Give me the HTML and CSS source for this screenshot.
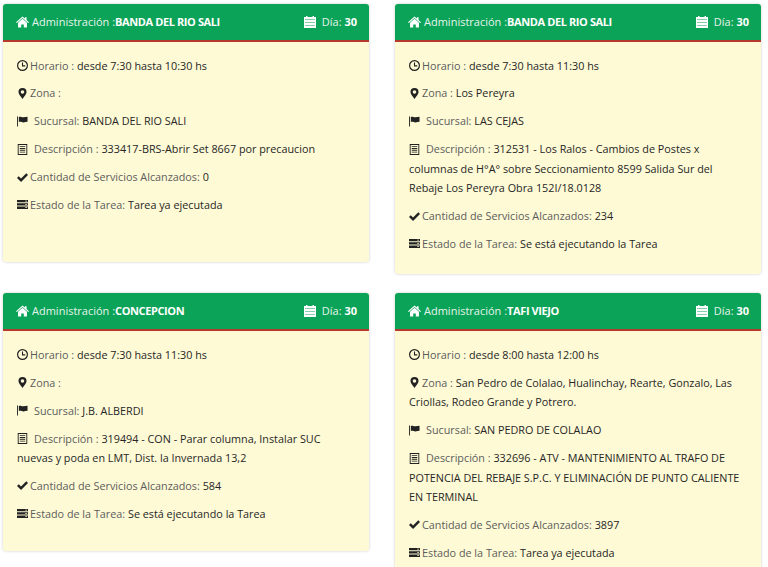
FILE: index.html
```html
<!DOCTYPE html>
<html lang="es">
  <head>
    <meta charset="UTF-8" />
    <title>Tareas programadas</title>
    <link rel="stylesheet" href="styles.css">
  </head>
  <body>
    <svg class="icon-defs" aria-hidden="true">
      <symbol id="i-home" viewBox="0 0 14 12"><path d="M7 0 L9.6 2.3 V1 H11.4 V3.9 L14 6.2 L13.1 7.1 L7 1.8 L.9 7.1 L0 6.2 Z M2.2 6.8 L7 2.6 L11.8 6.8 V12 H8.4 V8.6 H5.6 V12 H2.2 Z"/></symbol>
      <symbol id="i-cal" viewBox="0 0 12 12"><path fill-rule="evenodd" d="M2 0 H3.5 V1 H8.5 V0 H10 V1 H12 V12 H0 V1 H2 Z M1 3.4 V3.9 H11 V3.4 Z M1 6.2 V6.7 H11 V6.2 Z M1 9 V9.5 H11 V9 Z"/></symbol>
      <symbol id="i-clock" viewBox="0 0 12 12"><path fill-rule="evenodd" d="M6 0 A6 6 0 1 1 6 12 A6 6 0 1 1 6 0 Z M6 1.3 A4.7 4.7 0 1 0 6 10.7 A4.7 4.7 0 1 0 6 1.3 Z M5.4 2.8 H6.6 V5.8 H9 V7 H5.4 Z"/></symbol>
      <symbol id="i-pin" viewBox="0 0 10 12"><path fill-rule="evenodd" d="M5 0 A4.4 4.4 0 0 1 9.4 4.4 C9.4 7 6.6 9.8 5 12 C3.4 9.8 .6 7 .6 4.4 A4.4 4.4 0 0 1 5 0 Z M5 2.4 A2 2 0 1 0 5 6.4 A2 2 0 1 0 5 2.4 Z"/></symbol>
      <symbol id="i-flag" viewBox="0 0 12 12"><path d="M0 .5 H1 V11.5 H0 Z M2 1 C4 .2 5 1.6 7 1.4 C8.6 1.3 10 .8 11.5 .8 V6.4 C9.8 6.6 8.6 7 7 7 C5 7 4 5.8 2 6.6 Z"/></symbol>
      <symbol id="i-list" viewBox="0 0 12 12"><path fill-rule="evenodd" d="M.8 0 H11.2 V12 H.8 Z M1.8 1 V11 H10.2 V1 Z M3 2.4 H9 V3.4 H3 Z M3 4.4 H9 V5.4 H3 Z M3 6.4 H9 V7.4 H3 Z M3 8.4 H9 V9.4 H3 Z"/></symbol>
      <symbol id="i-ok" viewBox="0 0 13 11"><path d="M0 6 L2 4 L4.8 6.8 L11 .4 L13 2.4 L4.8 10.8 Z"/></symbol>
      <symbol id="i-tasks" viewBox="0 0 12 12"><path fill-rule="evenodd" d="M0 1 H12 V3.6 H0 Z M9 1.9 V2.7 H11 V1.9 Z M0 4.6 H12 V7.2 H0 Z M9 5.5 V6.3 H11 V5.5 Z M0 8.2 H12 V10.8 H0 Z M9 9.1 V9.9 H11 V9.1 Z"/></symbol>
    </svg>

    <div class="board">

      <div class="card">
        <div class="card-head">
          <span class="head-title"><svg class="icon home"><use href="#i-home"/></svg>Administración :<b>BANDA DEL RIO SALI</b></span>
          <span class="head-day"><svg class="icon cal"><use href="#i-cal"/></svg>Día: <b>30</b></span>
        </div>
        <div class="card-body">
          <p><svg class="icon"><use href="#i-clock"/></svg><span class="lbl">Horario :</span> desde 7:30 hasta 10:30 hs</p>
          <p><svg class="icon"><use href="#i-pin"/></svg><span class="lbl">Zona :</span></p>
          <p><svg class="icon wide"><use href="#i-flag"/></svg><span class="lbl">Sucursal:</span> BANDA DEL RIO SALI</p>
          <p><svg class="icon wide"><use href="#i-list"/></svg><span class="lbl">Descripción :</span> 333417-BRS-Abrir Set 8667 por precaucion</p>
          <p><svg class="icon"><use href="#i-ok"/></svg><span class="lbl">Cantidad de Servicios Alcanzados:</span> 0</p>
          <p><svg class="icon"><use href="#i-tasks"/></svg><span class="lbl">Estado de la Tarea:</span> Tarea ya ejecutada</p>
        </div>
      </div>

      <div class="card">
        <div class="card-head">
          <span class="head-title"><svg class="icon home"><use href="#i-home"/></svg>Administración :<b>BANDA DEL RIO SALI</b></span>
          <span class="head-day"><svg class="icon cal"><use href="#i-cal"/></svg>Día: <b>30</b></span>
        </div>
        <div class="card-body">
          <p><svg class="icon"><use href="#i-clock"/></svg><span class="lbl">Horario :</span> desde 7:30 hasta 11:30 hs</p>
          <p><svg class="icon"><use href="#i-pin"/></svg><span class="lbl">Zona :</span> Los Pereyra</p>
          <p><svg class="icon wide"><use href="#i-flag"/></svg><span class="lbl">Sucursal:</span> LAS CEJAS</p>
          <p><svg class="icon wide"><use href="#i-list"/></svg><span class="lbl">Descripción :</span> 312531 - Los Ralos - Cambios de Postes x columnas de H°A° sobre Seccionamiento 8599 Salida Sur del Rebaje Los Pereyra Obra 152I/18.0128</p>
          <p><svg class="icon"><use href="#i-ok"/></svg><span class="lbl">Cantidad de Servicios Alcanzados:</span> 234</p>
          <p><svg class="icon"><use href="#i-tasks"/></svg><span class="lbl">Estado de la Tarea:</span> Se está ejecutando la Tarea</p>
        </div>
      </div>

      <div class="card">
        <div class="card-head">
          <span class="head-title"><svg class="icon home"><use href="#i-home"/></svg>Administración :<b>CONCEPCION</b></span>
          <span class="head-day"><svg class="icon cal"><use href="#i-cal"/></svg>Día: <b>30</b></span>
        </div>
        <div class="card-body">
          <p><svg class="icon"><use href="#i-clock"/></svg><span class="lbl">Horario :</span> desde 7:30 hasta 11:30 hs</p>
          <p><svg class="icon"><use href="#i-pin"/></svg><span class="lbl">Zona :</span></p>
          <p><svg class="icon wide"><use href="#i-flag"/></svg><span class="lbl">Sucursal:</span> J.B. ALBERDI</p>
          <p><svg class="icon wide"><use href="#i-list"/></svg><span class="lbl">Descripción :</span> 319494 - CON - Parar columna, Instalar SUC nuevas y poda en LMT, Dist. la Invernada 13,2</p>
          <p><svg class="icon"><use href="#i-ok"/></svg><span class="lbl">Cantidad de Servicios Alcanzados:</span> 584</p>
          <p><svg class="icon"><use href="#i-tasks"/></svg><span class="lbl">Estado de la Tarea:</span> Se está ejecutando la Tarea</p>
        </div>
      </div>

      <div class="card">
        <div class="card-head">
          <span class="head-title"><svg class="icon home"><use href="#i-home"/></svg>Administración :<b>TAFI VIEJO</b></span>
          <span class="head-day"><svg class="icon cal"><use href="#i-cal"/></svg>Día: <b>30</b></span>
        </div>
        <div class="card-body">
          <p><svg class="icon"><use href="#i-clock"/></svg><span class="lbl">Horario :</span> desde 8:00 hasta 12:00 hs</p>
          <p><svg class="icon"><use href="#i-pin"/></svg><span class="lbl">Zona :</span> San Pedro de Colalao, Hualinchay, Rearte, Gonzalo, Las Criollas, Rodeo Grande y Potrero.</p>
          <p><svg class="icon wide"><use href="#i-flag"/></svg><span class="lbl">Sucursal:</span> SAN PEDRO DE COLALAO</p>
          <p><svg class="icon wide"><use href="#i-list"/></svg><span class="lbl">Descripción :</span> 332696 - ATV - MANTENIMIENTO AL TRAFO DE POTENCIA DEL REBAJE S.P.C. Y ELIMINACIÓN DE PUNTO CALIENTE EN TERMINAL</p>
          <p><svg class="icon"><use href="#i-ok"/></svg><span class="lbl">Cantidad de Servicios Alcanzados:</span> 3897</p>
          <p><svg class="icon"><use href="#i-tasks"/></svg><span class="lbl">Estado de la Tarea:</span> Tarea ya ejecutada</p>
        </div>
      </div>

    </div>
  </body>
</html>
```

FILE: styles.css
```css
html, body {
  height: 567px;
  overflow: hidden;
}

body {
  font-family: "Open Sans", sans-serif;
  font-size: 10.8px;
  background-color: #fff;
  color: #333;
  margin: 0;
  padding: 0;
}

.icon-defs {
  display: none;
}

.board {
  display: grid;
  grid-template-columns: 366px 366px;
  column-gap: 26px;
  row-gap: 19px;
  align-items: start;
  padding: 4px 0 0 3px;
}

.card {
  min-height: 257.5px;
  background-color: #fefad5;
  border-radius: 3px;
  box-shadow: 0 0 3px rgba(0, 0, 0, 0.2);
  overflow: hidden;
}

.card-head {
  display: flex;
  justify-content: space-between;
  align-items: center;
  height: 35px;
  padding: 0 12px 1px 13px;
  background-color: #0ba358;
  border-bottom: 2.5px solid #b5392c;
  color: #e6f5ec;
  font-size: 11px;
}

.head-title b {
  color: #fff;
  font-weight: 700;
  letter-spacing: -0.4px;
}

.head-day b {
  color: #fff;
  font-weight: 700;
}

.card-head .icon {
  color: #fff;
}

.card-body {
  padding: 13.5px 13px 12.5px 14px;
}

.card-body p {
  margin: 0 0 8.4px;
  line-height: 19.5px;
  font-weight: 500;
  color: #262626;
}

.lbl {
  font-weight: 400;
  color: #5c5c5c;
}

.icon {
  display: inline-block;
  width: 11px;
  height: 11px;
  margin-right: 2px;
  vertical-align: -1.5px;
  fill: currentColor;
  color: #222;
}

.icon.wide {
  margin-right: 6px;
}

.icon.home {
  width: 13px;
  height: 12px;
  margin-right: 3px;
}

.icon.cal {
  width: 12px;
  height: 12px;
  margin-right: 6px;
}
```
